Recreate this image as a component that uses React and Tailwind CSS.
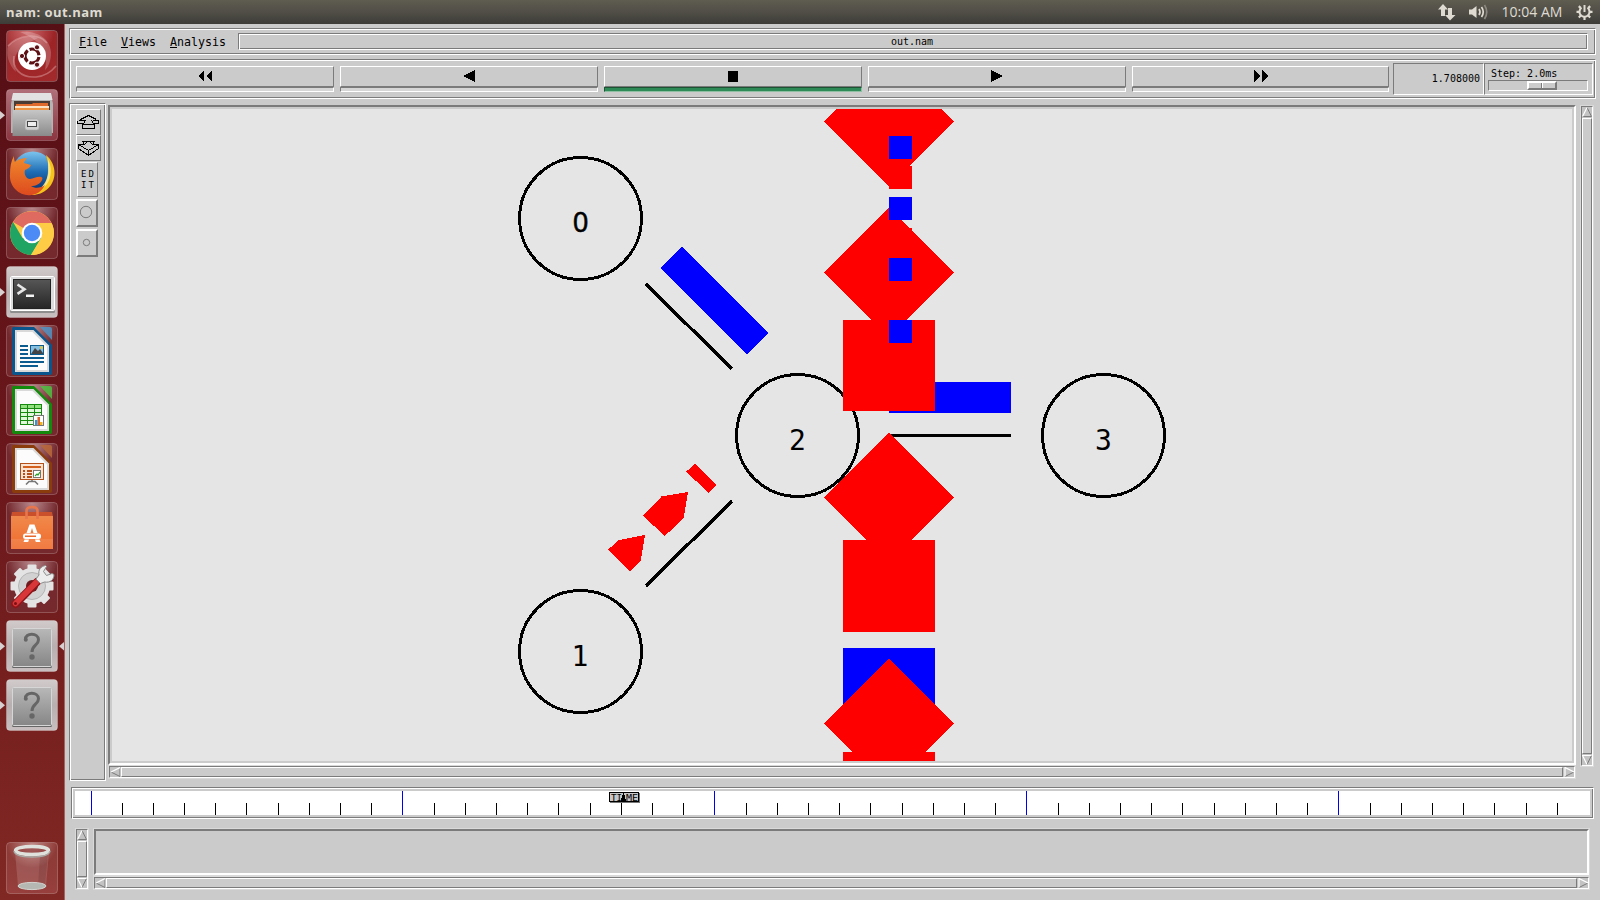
import React from 'react';

const SUNK = 'border border-t-[#7b7b7b] border-l-[#7b7b7b] border-b-white border-r-white';
const RAISED = 'border border-t-white border-l-white border-b-[#7b7b7b] border-r-[#7b7b7b]';
const GROOVE = SUNK + ' shadow-[inset_1px_1px_0_#fff,inset_-1px_-1px_0_#7b7b7b]';
const MONO = 'font-["DejaVu_Sans_Mono",monospace]';

/* ---------- launcher icons (52x52 tiles) ---------- */

function Dash() {
  return (
    <g>
      <rect x="1" y="1" width="50" height="50" rx="3" fill="url(#dash)" />
      <path d="M2 16C10 8 22 5 32 8L20 14C10 20 6 30 10 42 2 34 0 24 2 16Z" fill="#fff" opacity=".2" />
      <path d="M14 2c16-2 30 6 31 20 0 8-2 14-6 18 3-14 0-28-25-38Z" fill="#fff" opacity=".22" />
      <path d="M8 26c-2 12 6 22 22 21 10-1 16-6 20-11M2 16C12 5 32 2 41 13" fill="none" stroke="#f6d4d4" strokeOpacity=".35" strokeWidth="1.500" />
      <circle cx="26" cy="26" r="14" fill="#fff" />
      <circle cx="26" cy="26" r="7" fill="none" stroke="#5e1114" strokeWidth="3.2" strokeDasharray="12.6 2.06" strokeDashoffset="-1" />
      <g fill="#5e1114" stroke="#fff" strokeWidth="1">
        <circle cx="16" cy="26" r="2.6" />
        <circle cx="31" cy="17.3" r="2.6" />
        <circle cx="31" cy="34.7" r="2.6" />
      </g>
    </g>
  );
}

function Files() {
  return (
    <g>
      <path d="M7 5h38l2 10v29H5V15Z" fill="#b4b4b4" />
      <path d="M7 4h38l1.500 7h-41Z" fill="#e2e2e2" />
      <rect x="8" y="12" width="36" height="10" fill="#4a3b35" />
      <path d="M10 15h16l1-1h15v8H9Z" fill="#e06a2c" />
      <rect x="9" y="17" width="34" height="2" fill="#fbe3c4" />
      <rect x="9" y="19" width="34" height="3" fill="#ee9443" />
      <path d="M7 21h38l1 26H6.500Z" fill="url(#steel)" />
      <rect x="19" y="30" width="14" height="11" rx="2.500" fill="#d0d0d0" stroke="#a6a6a6" strokeWidth=".6" />
      <rect x="21.500" y="32.500" width="9" height="5" fill="#eee" stroke="#444" strokeWidth="1" />
    </g>
  );
}

function Firefox() {
  return (
    <g>
      <circle cx="27" cy="24" r="20.500" fill="url(#ffblue)" />
      <path d="M40 7c5 4 9 11 8.500 19C48 38 38 47 26 47c-5 0-9-2-12-4 14 3 24-2 27-12 3-9 1-17-1-24Z" fill="#f6c21c" />
      <path d="M42 11c4 8 4 18-1 25-2 3-5 5-8 6 6-6 9-12 9-19Z" fill="#fdf0a0" opacity=".75" />
      <path d="M8 8c0 2 0 4 1 6 3-3 8-4 12-4-2 2-3 4-3 5 2 1 5 1 7 2-1 3-4 4-6 5-1 3 0 6 2 8 4 3 9-2 14-1 1 0 2 1 1 3-2 4-6 6-11 6 4 3 10 2 14-1-4 8-11 11-18 10C11 46 3 37 4 26c0-7 1-13 4-18Z" fill="url(#fox)" />
    </g>
  );
}

function Chrome() {
  return (
    <g>
      <circle cx="26" cy="26" r="22" fill="#fecd45" />
      <path d="M26 26 7 15A22 22 0 0 1 45.500 16H26Z" fill="#df6a60" />
      <path d="M7 15A22 22 0 0 0 25 48L35 31 26 26 16.500 31Z" fill="#1fa463" />
      <path d="M45.500 16A22 22 0 0 1 25 48L35.500 31 35 16Z" fill="#fecd45" />
      <circle cx="26" cy="26" r="10.300" fill="#fff" />
      <circle cx="26" cy="26" r="8.200" fill="#4c8bf5" />
    </g>
  );
}

function Terminal() {
  return (
    <g>
      <rect x="4" y="10" width="45" height="37" rx="1.500" fill="#8e8e8e" />
      <rect x="4.500" y="10.500" width="44" height="34" rx="1" fill="#dcdcdc" stroke="#fff" />
      <rect x="7.500" y="13.500" width="37" height="29" fill="url(#screen)" stroke="#222" />
      <path d="M11.500 18.500l7 4.700-7 4.700" fill="none" stroke="#e6e6e6" strokeWidth="2.600" />
      <rect x="20" y="28.500" width="8" height="2.500" fill="#f4f4f4" />
    </g>
  );
}

function Office({ dark, corner, children }) {
  return (
    <g>
      <path d="M7 2h21l18 18v28q0 2-2 2H8q-2 0-2-2V4q0-2 1-2Z" fill={dark} />
      <path d="M34 2h10q2 0 2 2v11Z" fill={corner} opacity=".85" />
      <path d="M9 5h18.500L43 20.500V47H9Z" fill="#d9d9d9" />
      <path d="M11 7h15.500L41 21.500V45H11Z" fill="#fcfcfc" />
      {children}
    </g>
  );
}

function Writer() {
  return (
    <Office dark="#0a568c" corner="#4f93c4">
      <g fill="#0c5c8f">
        <rect x="14" y="20" width="8" height="2" />
        <rect x="14" y="24" width="8" height="2" />
        <rect x="14" y="28" width="8" height="2" />
        <rect x="14" y="32" width="24" height="2" />
        <rect x="14" y="36" width="24" height="2" />
        <rect x="14" y="40" width="18" height="2" />
      </g>
      <rect x="24.500" y="20.500" width="13" height="9" fill="#86bfe0" stroke="#0c5c8f" />
      <path d="M25 29l4-6 3 3 2-2 3 4v1Z" fill="#444" />
      <circle cx="35.500" cy="22.500" r="1.500" fill="#e8c63c" />
    </Office>
  );
}

function Calc() {
  return (
    <Office dark="#138a0c" corner="#4cc13f">
      <rect x="14" y="20" width="22" height="21" fill="#158a0e" />
      {[0, 1, 2, 3, 4].map((r) =>
        [0, 1, 2].map((c) => (
          <rect key={r + '-' + c} x={15 + c * 7} y={21 + r * 4} width="6" height="3" fill={r === 0 ? '#93e080' : '#e2f8dc'} />
        ))
      )}
      <rect x="27.500" y="31.500" width="10" height="10" fill="#fff" stroke="#777" />
      <rect x="29" y="36" width="2.500" height="5" fill="#2a9ae0" />
      <rect x="31.500" y="33" width="2.500" height="8" fill="#e0602a" />
      <rect x="34" y="38" width="2.500" height="3" fill="#f0b41c" />
    </Office>
  );
}

function Impress() {
  return (
    <Office dark="#8a3c0c" corner="#b9683a">
      <rect x="14.500" y="20.500" width="23" height="16" fill="#fbe4d4" stroke="#b4501a" />
      <rect x="17" y="23" width="18" height="2" fill="#d4601e" />
      <g fill="#b4501a">
        <rect x="17" y="27" width="2" height="2" />
        <rect x="21" y="27" width="5" height="2" />
        <rect x="17" y="30" width="2" height="2" />
        <rect x="21" y="30" width="5" height="2" />
        <rect x="17" y="33" width="2" height="2" />
        <rect x="21" y="33" width="5" height="2" />
      </g>
      <rect x="27.500" y="27.500" width="7" height="7" fill="#fff" stroke="#777" />
      <path d="M29 33l2-2 1 1 2-3" fill="none" stroke="#2aa02a" strokeWidth="1.200" />
      <path d="M26 37v2M20 41.500l3-3h6l3 3" fill="none" stroke="#777" strokeWidth="1.600" />
    </Office>
  );
}

function Software() {
  return (
    <g>
      <path d="M6 10h40l1 5H5Z" fill="#c9502a" />
      <path d="M5 14h42v33H5Z" fill="url(#bag)" />
      <rect x="5" y="37" width="42" height="10" fill="#fff" opacity=".1" />
      <path d="M20.500 17V9q0-4 5.500-4t5.500 4v8" fill="none" stroke="#e8764c" strokeWidth="2.600" />
      <path d="M23.500 22.500h5l3 8.500h-4l-1.500-5-1.500 5h-4Z" fill="#fff" />
      <rect x="17" y="31.500" width="18" height="5.500" rx="2.500" fill="#fff" />
      <rect x="19" y="33.500" width="11" height="1.500" fill="#e86a2c" />
      <path d="M18.500 37.500h4.500l-.8 2.500h-4.700ZM29 37.500h4.500l1 2.500h-4.700Z" fill="#fff" />
    </g>
  );
}

function Settings() {
  return (
    <g>
      <g fill="#e4e4e4">
        {[0, 45, 90, 135].map((a) => (
          <rect key={a} x="21.500" y="3.500" width="9" height="43" rx="1" transform={`rotate(${a} 26 25)`} />
        ))}
        <circle cx="26" cy="25" r="18" />
      </g>
      <circle cx="26" cy="25" r="13.500" fill="#d2d2d2" stroke="#b5b5b5" />
      <circle cx="26" cy="25" r="6" fill="#6d1d20" />
      <path d="M9.500 43L31 21" stroke="#8f1417" strokeWidth="8" strokeLinecap="round" />
      <path d="M9.500 42.500L31 20.500" stroke="#d8373a" strokeWidth="5.500" strokeLinecap="round" />
      <path d="M34.500 22.500l-4.500-4.500 3-4c-1-5 1.500-8.500 6.500-9.500l1 1-3 5 3 4 5.500-2 2 1c0 5.500-4 8.500-9.500 7.500Z" fill="#ededed" stroke="#8c8c8c" />
      <circle cx="9.500" cy="42.500" r="1.500" fill="#7a1013" />
    </g>
  );
}

function Unknown() {
  return (
    <g>
      <rect x="6" y="9" width="40" height="39" rx="1.500" fill="#666" />
      <rect x="6.500" y="8.500" width="39" height="38" rx="1" fill="url(#slate)" stroke="#d6d6d6" />
      <path d="M19.500 19.500c-.5-7 13-7 13 .2 0 5.800-6.500 5.300-6.500 12.300" fill="none" stroke="#666" strokeWidth="3" />
      <circle cx="19.800" cy="19.800" r="2" fill="#666" />
      <circle cx="26" cy="37" r="2.700" fill="#666" />
    </g>
  );
}

function Trash() {
  return (
    <g>
      <path d="M9 10l3 34q14 5 28 0l3-34Z" fill="#fff" opacity=".14" />
      <path d="M34 14l-2 30 7-1 3-31Z" fill="#3a0c0c" opacity=".15" />
      <ellipse cx="26" cy="44" rx="14" ry="3.600" fill="#b4b7b2" stroke="#d4d4d0" />
      <ellipse cx="26" cy="8.500" rx="16.500" ry="4" fill="#8b3a3a" fillOpacity=".5" stroke="#dfe1dd" strokeWidth="3.400" />
      <path d="M8 9q1 6 18 6t18-6" fill="none" stroke="#a8aaa6" strokeWidth="1.500" />
    </g>
  );
}

const LAUNCHER = [
  { Icon: Dash },
  { Icon: Files, run: true, tone: 'rose' },
  { Icon: Firefox },
  { Icon: Chrome },
  { Icon: Terminal, run: true, tone: 'gray' },
  { Icon: Writer },
  { Icon: Calc },
  { Icon: Impress },
  { Icon: Software },
  { Icon: Settings },
  { Icon: Unknown, run: true, tone: 'gray', focus: true },
  { Icon: Unknown, run: true, tone: 'gray' },
];

const TONES = { gray: 'url(#tileGray)', rose: 'url(#tileRose)', dark: 'url(#tileDark)', bin: 'url(#tileBin)' };

function Tile({ Icon, run, tone = 'dark', focus }) {
  return (
    <div className="flex h-[52px] w-[64px] shrink-0 items-center">
      <svg width="6" height="52" viewBox="0 0 6 52">{run && <path d="M0 22l5 4.300-5 4.300Z" fill="#d8d0d0" />}</svg>
      <svg width="52" height="52" viewBox="0 0 52 52">
        <rect x=".5" y=".5" width="51" height="51" rx="3.500" fill={TONES[tone]} />
        <Icon />
        <rect x=".5" y=".5" width="51" height="51" rx="3.500" fill="none" stroke="#fff" strokeOpacity=".22" />
      </svg>
      <svg width="6" height="52" viewBox="0 0 6 52">{focus && <path d="M6 22l-5 4.300 5 4.300Z" fill="#d8d0d0" />}</svg>
    </div>
  );
}

function Launcher() {
  return (
    <aside className="flex h-full w-[65px] flex-col gap-[7px] border-r border-[#a5625f] bg-linear-to-b from-[#550f15] via-[#6b171b] to-[#802823] pt-[6px] pb-[6px]">
      {LAUNCHER.map((t, i) => (
        <Tile key={i} {...t} />
      ))}
      <div className="grow" />
      <Tile Icon={Trash} tone="bin" />
    </aside>
  );
}

/* ---------- Tk widgets ---------- */

function Arrow({ dir }) {
  const shapes = {
    left: ['M1 5L10 .5', 'M1 5l9 4.500V.5'],
    right: ['M1 9.500V.5L10 5', 'M1 9.500L10 5'],
    up: ['M.5 9.500L5 .5', 'M5 .5l4.500 9H.5'],
    down: ['M9.500 .5H.5L5 9.500', 'M5 9.500L9.500 .5'],
  };
  return (
    <svg width="10" height="10" viewBox="0 0 10 10" className="shrink-0">
      <path d={shapes[dir][1]} fill="none" stroke="#7b7b7b" />
      <path d={shapes[dir][0]} fill="none" stroke="#fff" strokeWidth="1.200" />
    </svg>
  );
}

function HScroll({ className = '' }) {
  return (
    <div className={`flex h-[12px] bg-[#c3c3c3] shadow-[0_0_0_1px_#d9d9d9] ${SUNK} ${className}`}>
      <Arrow dir="left" />
      <div className={`ml-[1px] mr-[1px] grow bg-[#cbcbcb] ${RAISED}`} />
      <Arrow dir="right" />
    </div>
  );
}

function VScroll({ className = '' }) {
  return (
    <div className={`flex w-[12px] shrink-0 flex-col bg-[#c3c3c3] shadow-[0_0_0_1px_#d9d9d9] ${SUNK} ${className}`}>
      <Arrow dir="up" />
      <div className={`mt-[1px] mb-[1px] grow bg-[#cbcbcb] ${RAISED}`} />
      <Arrow dir="down" />
    </div>
  );
}

function MenuBar() {
  return (
    <div className={`flex h-[27px] w-[1527px] shrink-0 items-center pl-[9px] pr-[7px] ${GROOVE}`}>
      <div className={`flex h-full w-[159px] shrink-0 items-center gap-[14px] text-[11.630px] leading-[14px] text-black ${MONO}`}>
        <span><u className="underline-offset-[1px]">F</u>ile</span>
        <span><u className="underline-offset-[1px]">V</u>iews</span>
        <span><u className="underline-offset-[1px]">A</u>nalysis</span>
      </div>
      <div className={`mb-px flex h-[17px] grow items-center justify-center pt-[2px] pr-[2px] text-[10px] leading-none ${MONO} ${GROOVE}`}>out.nam</div>
    </div>
  );
}

function Glyph({ kind }) {
  return (
    <svg width="16" height="12" viewBox="0 0 16 12" shapeRendering="crispEdges">
      {kind === 'rew' && <path d="M1 6l6-6v12ZM9 6l6-6v12Z" />}
      {kind === 'back' && <path d="M2 6L14 0v12Z" />}
      {kind === 'stop' && <rect x="3" y="1" width="10" height="11" />}
      {kind === 'play' && <path d="M14 6L2 0v12Z" />}
      {kind === 'ff' && <path d="M15 6L9 0v12ZM7 6L1 0v12Z" />}
    </svg>
  );
}

function Toolbar() {
  return (
    <div className={`mt-[4px] flex h-[40px] w-[1527px] shrink-0 pl-[6px] ${GROOVE}`}>
      <div className="mt-[6px] flex gap-[6px]">
        {['rew', 'back', 'stop', 'play', 'ff'].map((k) => (
          <div key={k} className={k === 'ff' ? 'w-[257px]' : 'w-[258px]'}>
            <div className={`flex h-[21px] items-start justify-center pt-[3px] ${RAISED}`}>
              <Glyph kind={k} />
            </div>
            <div
              className={
                k === 'stop'
                  ? 'h-[5px] border border-t-[#1c5434] border-l-[#1c5434] border-b-[#8fbfa3] border-r-[#8fbfa3] bg-[#2e8b57]'
                  : `h-[5px] bg-[#d6d6d6] ${SUNK}`
              }
            />
          </div>
        ))}
      </div>
      <div className={`mt-[3px] ml-[4px] flex h-[32px] w-[91px] shrink-0 items-center justify-end pr-[3px] text-[10px] leading-none ${MONO} ${SUNK}`}>
        1.708000
      </div>
      <div className={`mt-[3px] h-[32px] w-[109px] shrink-0 pl-[3px] ${SUNK}`}>
        <div className={`h-[16px] pt-[4px] pl-[3px] text-[10px] leading-[12px] whitespace-nowrap ${MONO}`}>Step: 2.0ms</div>
        <div className={`flex h-[11px] w-[100px] pl-[38px] ${SUNK}`}>
          <div className="flex h-[9px] w-[30px] border-2 border-t-white border-l-white border-b-[#7b7b7b] border-r-[#7b7b7b] bg-[#cbcbcb]">
            <div className="h-full w-[13px] border-r border-[#7b7b7b]" />
            <div className="h-full w-px bg-white" />
          </div>
        </div>
      </div>
    </div>
  );
}

function ToolPanel() {
  return (
    <div className={`flex w-[37px] shrink-0 flex-col items-start pt-[5px] pl-[6px] ${GROOVE}`}>
      <div className={`h-[26px] w-[25px] ${RAISED}`}>
        <svg width="23" height="24" viewBox="0 0 23 24" fill="none" stroke="#000" shapeRendering="crispEdges">
          <path d="M11.500 5.500L3.500 9.500M11.500 5.500L19.500 9.500M1.500 10.500H7.500M15.500 10.500H21.500M.5 10.500V13.500H6.500L8.500 10.500M21.500 10.500V13.500H16.500L14.500 10.500M5.500 14.500H17.500V18.500H5.500ZM7.500 12.500L5.500 14.500M15.500 12.500L17.500 14.500" />
        </svg>
      </div>
      <div className={`h-[26px] w-[25px] ${RAISED}`}>
        <svg width="23" height="24" viewBox="0 0 23 24" fill="none" stroke="#000" shapeRendering="crispEdges">
          <path d="M5.500 5.500H17.500L15.500 8.500H21.500V12.500L11.500 19.500L1.500 12.500V8.500H7.500L5.500 5.500M1.500 8.500L11.500 14.500L21.500 8.500M11.500 14.500V19.500M8.500 8.500L9.500 5.500M14.500 8.500L13.500 5.500" />
        </svg>
      </div>
      <div className={`mt-px ml-px flex h-[35px] w-[21px] flex-col items-center justify-center text-[9px] leading-[11px] ${MONO} ${RAISED}`}>
        <span className="pl-[2px] tracking-[2px]">ED</span>
        <span className="pl-[2px] tracking-[2px]">IT</span>
      </div>
      <div className="mt-[2px] h-[28px] w-[22px] border-2 border-t-white border-l-white border-b-[#7b7b7b] border-r-[#7b7b7b]">
        <svg width="18" height="24" viewBox="0 0 18 24"><circle cx="8" cy="11" r="5.700" fill="none" stroke="#7b7b7b" /></svg>
      </div>
      <div className="mt-[2px] h-[28px] w-[22px] border-2 border-t-white border-l-white border-b-[#7b7b7b] border-r-[#7b7b7b]">
        <svg width="18" height="24" viewBox="0 0 18 24"><circle cx="8.500" cy="11.500" r="3.200" fill="none" stroke="#7b7b7b" /></svg>
      </div>
    </div>
  );
}

function Network() {
  return (
    <svg width="1460" height="652" viewBox="112 109 1460 652" shapeRendering="crispEdges" className="block bg-[#e5e5e5]">
      <g fill="none" stroke="#000" strokeWidth="3">
        <circle cx="580.500" cy="218.500" r="61" />
        <circle cx="580.500" cy="651.500" r="61" />
        <circle cx="797.500" cy="435.500" r="61" />
        <circle cx="1103.500" cy="435.500" r="61" />
        <path d="M889 435.500H1011" />
        <path d="M646 284L732 369M646 586L732 501" strokeWidth="3.500" />
      </g>
      <g textAnchor="middle" fill="#000">
        <text x="580.500" y="232" fontSize="27.500" fontFamily="Noto Sans, sans-serif" stroke="#000" strokeWidth=".5">0</text>
        <text x="580" y="666" fontSize="28" fontFamily="DejaVu Sans Mono, monospace">1</text>
        <text x="797.500" y="449.500" fontSize="28" fontFamily="DejaVu Sans Mono, monospace">2</text>
        <text x="1103.500" y="449.500" fontSize="28" fontFamily="DejaVu Sans Mono, monospace">3</text>
      </g>
      <g fill="#00f">
        <path d="M682 247L768 333L747 354L660.500 268Z" />
        <rect x="889" y="382" width="122" height="31" />
        <rect x="843" y="648" width="92" height="92" />
      </g>
      <g fill="#f00">
        <path d="M695 464L716 485L708.300 493L686.300 471.500Z" />
        <path d="M661.700 496.300L688 492L683.700 518L664.500 536.300L643.300 515.500Z" />
        <path d="M618.300 540.300L645 535L640.700 560.700L630 571L608.300 549.500Z" />
        <path d="M889 56.800L953.800 121.500L889 186.300L824.200 121.500Z" />
        <rect x="889" y="166" width="23" height="23" />
        <path d="M889 207.500L953.800 272.500L889 337.300L824.200 272.500Z" />
        <rect x="889" y="228" width="23" height="23" />
        <rect x="843" y="320" width="92" height="91" />
        <path d="M889 432.500L953.800 497.500L889 562.300L824.200 497.500Z" />
        <rect x="843" y="540" width="92" height="92" />
        <path d="M889 658.500L953.800 723.500L889 788.300L824.200 723.500Z" />
        <rect x="843" y="752" width="92" height="9" />
      </g>
      <g fill="#00f">
        <rect x="889" y="136" width="23" height="23" />
        <rect x="889" y="197" width="23" height="23" />
        <rect x="889" y="258" width="23" height="23" />
        <rect x="889" y="320" width="23" height="23" />
      </g>
    </svg>
  );
}

function Timeline() {
  const ticks = [];
  for (let i = 0; i <= 47; i++) ticks.push(Math.floor(91 + 31.197 * i));
  return (
    <div className={`mt-[6px] ml-[2px] flex h-[32px] w-[1523px] shrink-0 p-[3px] ${GROOVE}`}>
      <svg width="1515" height="24" viewBox="75 791 1515 24" shapeRendering="crispEdges" className="bg-white">
        {ticks.map((x, i) => (
          <rect key={x} x={x} y={i % 10 ? 803 : 791} width="1" height={i % 10 ? 12 : 24} fill={i % 10 ? '#000' : '#0000f0'} />
        ))}
        <rect x="610" y="793" width="30" height="10" fill="#777" />
        <rect x="609.500" y="792.500" width="29" height="9" fill="#c8c8c8" stroke="#000" />
        <text x="611" y="800.500" fontSize="8.500" textLength="11" lengthAdjust="spacingAndGlyphs" fontFamily="DejaVu Sans Mono, monospace">TI</text>
        <text x="626" y="800.500" fontSize="8.500" textLength="12" lengthAdjust="spacingAndGlyphs" fontFamily="DejaVu Sans Mono, monospace">ME</text>
        <path d="M623 793h1l1 4 1 3v2h-5v-2l1-3Z" fill="#000" />
      </svg>
    </div>
  );
}

function TitleBar() {
  return (
    <header className="flex h-[24px] shrink-0 items-center justify-between bg-linear-to-b from-[#5f5c50] via-[#504e47] to-[#3d3c37] pl-[6px] pr-[7px] text-[#dfdbd2]">
      <div className='font-["Open_Sans",sans-serif] text-[13px] leading-none font-bold tracking-[0.450px]'>nam: out.nam</div>
      <div className="flex items-center">
        <svg width="19" height="18" viewBox="0 0 19 18" fill="#dfdbd2">
          <path d="M6 1l5 5.500H8V13H4V6.500H1ZM13 17.500L8 12h3V5h4v7h3.500Z" />
        </svg>
        <svg width="21" height="16" viewBox="0 0 21 16" fill="#dfdbd2" className="ml-[12px]">
          <path d="M1 5.500h3L8.500 2v12L4 10.500H1Z" />
          <path d="M11 5q2 3 0 6M13.500 3q3.500 5 0 10" fill="none" stroke="#dfdbd2" strokeWidth="1.700" />
          <path d="M16.500 1q4.500 7 0 14" fill="none" stroke="#8b887f" strokeWidth="1.700" />
        </svg>
        <div className='ml-[12px] w-[62px] text-center font-["Open_Sans",sans-serif] text-[14px] leading-none whitespace-nowrap'>10:04 AM</div>
        <svg width="17" height="18" viewBox="0 0 17 18" fill="none" stroke="#dfdbd2" className="ml-[13px]">
          <path d="M5.500 4.800a5 5 0 1 0 6 0" strokeWidth="2" />
          <path d="M8.500 2v7" strokeWidth="2" />
          <path d="M3.500 8.800H.5M16.500 8.800h-3M4.800 12.500l-2 2M12.200 12.500l2 2M8.500 14v3M4.800 5.100l-2-2M12.200 5.100l2-2" strokeWidth="2.200" />
        </svg>
      </div>
    </header>
  );
}

export default function App() {
  return (
    <div className="flex h-[900px] w-[1600px] flex-col overflow-hidden bg-[#cbcbcb] text-black">
      <TitleBar />
      <div className="flex h-[876px]">
        <Launcher />
        <main className="flex w-[1535px] flex-col pt-[4px] pl-[4px]">
          <MenuBar />
          <Toolbar />
          <div className="mt-[4px] flex h-[678px] shrink-0">
            <ToolPanel />
            <div className="ml-[2px] w-[1468px] shrink-0 pt-[2px]">
              <div className="h-[660px] border-2 border-t-[#7b7b7b] border-l-[#7b7b7b] border-b-white border-r-white p-[2px]">
                <Network />
              </div>
              <HScroll className="mt-px ml-px w-[1466px]" />
            </div>
            <VScroll className="mt-[3px] ml-[5px] h-[660px]" />
          </div>
          <Timeline />
          <div className="mt-[10px] ml-[7px] flex h-[60px] shrink-0">
            <VScroll />
            <div className="ml-[6px] w-[1495px]">
              <div className="h-[46px] border-2 border-t-[#7b7b7b] border-l-[#7b7b7b] border-b-white border-r-white shadow-[0_0_0_1px_#d9d9d9]" />
              <HScroll className="mt-[2px]" />
            </div>
          </div>
        </main>
      </div>
      <svg width="10" height="10" className="absolute -left-10">
        <defs>
          <radialGradient id="tileDark" cx=".5" cy="0" r="1"><stop offset="0" stopColor="#b98a8e" /><stop offset=".5" stopColor="#73292e" /><stop offset="1" stopColor="#76292d" /></radialGradient>
          <radialGradient id="tileBin" cx=".5" cy="0" r="1"><stop offset="0" stopColor="#c08a86" /><stop offset=".5" stopColor="#8e3a37" /><stop offset="1" stopColor="#963f3c" /></radialGradient>
          <linearGradient id="tileRose" x2="0" y2="1"><stop offset="0" stopColor="#b0707a" /><stop offset="1" stopColor="#8c3540" /></linearGradient>
          <linearGradient id="tileGray" x2="0" y2="1"><stop offset="0" stopColor="#d2cbcb" /><stop offset=".5" stopColor="#b8b0b0" /><stop offset="1" stopColor="#c8c0c0" /></linearGradient>
          <radialGradient id="dash" cx=".4" cy="0" r="1.1"><stop offset="0" stopColor="#cf6a6c" /><stop offset=".5" stopColor="#9c2427" /><stop offset="1" stopColor="#a32a2c" /></radialGradient>
          <linearGradient id="steel" x2="0" y2="1"><stop offset="0" stopColor="#c6c6c6" /><stop offset="1" stopColor="#8a8a8a" /></linearGradient>
          <linearGradient id="slate" x2="0" y2="1"><stop offset="0" stopColor="#b8b8b8" /><stop offset="1" stopColor="#868686" /></linearGradient>
          <linearGradient id="screen" x2="0" y2="1"><stop offset="0" stopColor="#565656" /><stop offset="1" stopColor="#262626" /></linearGradient>
          <linearGradient id="bag" x2="0" y2="1"><stop offset="0" stopColor="#f0894c" /><stop offset="1" stopColor="#f06c2c" /></linearGradient>
          <linearGradient id="ffblue" x2="0" y2="1"><stop offset="0" stopColor="#7cc4ee" /><stop offset=".5" stopColor="#1d6cb4" /><stop offset="1" stopColor="#0c2c68" /></linearGradient>
          <linearGradient id="fox" x2="0" y2="1"><stop offset="0" stopColor="#f08a2c" /><stop offset="1" stopColor="#dd4a1e" /></linearGradient>
        </defs>
      </svg>
    </div>
  );
}
